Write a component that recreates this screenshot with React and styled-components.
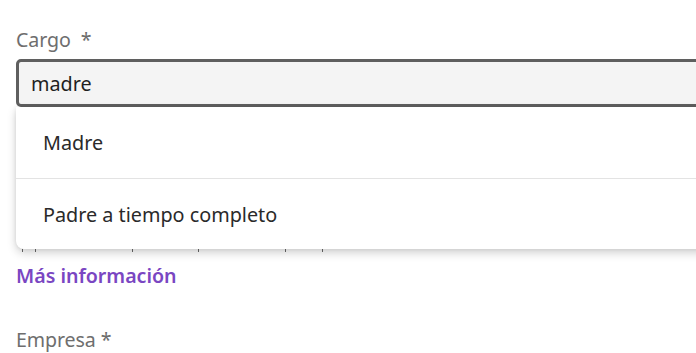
import React from "react";
import styled, { createGlobalStyle } from "styled-components";

const Global = createGlobalStyle`
  html, body { margin: 0; padding: 0; background: #ffffff; }
  body { font-family: "Noto Sans", "Open Sans", sans-serif; overflow: hidden; }
`;

const Page = styled.div`
  width: 696px;
  height: 353px;
  overflow: hidden;
  padding: 26px 0 0 16px;
  box-sizing: border-box;
`;

const Label = styled.div`
  font-size: 19.6px;
  line-height: 28px;
  height: 28px;
  color: #6e6e6e;
  margin-bottom: ${(p) => p.$gap || 0}px;
  letter-spacing: -0.1px;
`;

const Star = styled.span`
  margin-left: ${(p) => p.$gap || 6}px;
`;

const FieldArea = styled.div`
  position: relative;
  width: 760px;
`;

const Input = styled.div`
  box-sizing: border-box;
  height: 48px;
  border: 3px solid #5f5f5f;
  border-radius: 5px;
  background: #f4f4f4;
  display: flex;
  align-items: center;
  padding-left: 12px;
  font-size: 19.8px;
  color: #1f1f1f;
`;

const Behind = styled.div`
  height: 147px;
  display: flex;
  align-items: flex-end;
  padding-bottom: 2px;
  box-sizing: border-box;
`;

const Tick = styled.span`
  display: block;
  width: 1px;
  height: ${(p) => p.$h || 6}px;
  background: #6a6a6a;
  margin-left: ${(p) => p.$x}px;
`;

const Menu = styled.div`
  position: absolute;
  top: 48px;
  left: 0;
  right: 0;
  background: #ffffff;
  border-radius: 0 0 8px 8px;
  box-shadow: 0 4px 10px rgba(0, 0, 0, 0.18), 0 0 4px rgba(0, 0, 0, 0.08);
  z-index: 2;
`;

const Option = styled.div`
  height: 71px;
  display: flex;
  align-items: center;
  padding-left: 27px;
  font-size: 19.8px;
  color: #2a2a2a;
  border-top: ${(p) => (p.$divider ? "1px solid #e3e3e3" : "none")};
  box-sizing: border-box;
`;

const Link = styled.a`
  display: block;
  font-size: 19.6px;
  font-weight: 600;
  line-height: 26px;
  color: #7a46c2;
  text-decoration: none;
  margin-top: 9px;
`;

const Spacer = styled.div`
  height: ${(p) => p.$h}px;
`;

export default function App() {
  return (
    <>
      <Global />
      <Page>
        <Label $gap={5}>
          Cargo<Star $gap={10}>*</Star>
        </Label>
        <FieldArea>
          <Input>madre</Input>
          <Behind>
            <Tick $x={6} $h={3} />
            <Tick $x={12} />
            <Tick $x={96} />
            <Tick $x={65} />
            <Tick $x={86} />
            <Tick $x={36} />
          </Behind>
          <Menu>
            <Option>Madre</Option>
            <Option $divider>Padre a tiempo completo</Option>
          </Menu>
        </FieldArea>
        <Link href="#">Más información</Link>
        <Spacer $h={37} />
        <Label>
          Empresa<Star $gap={5}>*</Star>
        </Label>
      </Page>
    </>
  );
}
